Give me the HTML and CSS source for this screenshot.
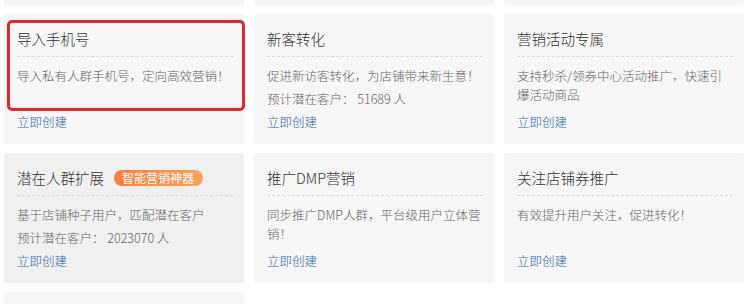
FILE: index.html
```html
<!DOCTYPE html>
<html lang="zh-CN">
<head>
<meta charset="utf-8">
<link rel="stylesheet" href="styles.css">
</head>
<body>
<div class="grid">
  <div class="stub"></div>
  <div class="stub"></div>
  <div class="stub"></div>

  <div class="card">
    <div class="title">导入手机号</div>
    <p class="desc">导入私有人群手机号，定向高效营销！</p>
    <a class="link" href="#">立即创建</a>
    <div class="highlight"></div>
  </div>
  <div class="card">
    <div class="title">新客转化</div>
    <p class="desc">促进新访客转化，为店铺带来新生意！</p>
    <p class="desc extra">预计潜在客户： 51689 人</p>
    <a class="link" href="#">立即创建</a>
  </div>
  <div class="card">
    <div class="title">营销活动专属</div>
    <p class="desc">支持秒杀/领券中心活动推广，快速引爆活动商品</p>
    <a class="link" href="#">立即创建</a>
  </div>

  <div class="card hover">
    <div class="title">潜在人群扩展<span class="badge">智能营销神器</span></div>
    <p class="desc">基于店铺种子用户，匹配潜在客户</p>
    <p class="desc extra">预计潜在客户： 2023070 人</p>
    <a class="link" href="#">立即创建</a>
  </div>
  <div class="card">
    <div class="title">推广DMP营销</div>
    <p class="desc">同步推广DMP人群，平台级用户立体营销！</p>
    <a class="link" href="#">立即创建</a>
  </div>
  <div class="card">
    <div class="title">关注店铺券推广</div>
    <p class="desc">有效提升用户关注，促进转化！</p>
    <a class="link" href="#">立即创建</a>
  </div>

  <div class="stub bottom"></div>
</div>
</body>
</html>
```

FILE: styles.css
```css
html, body {
  margin: 0;
  padding: 0;
  background: #fff;
}
body {
  font-family: "Noto Sans CJK SC", "Microsoft YaHei", sans-serif;
  width: 752px;
  height: 304px;
  overflow: hidden;
}
.grid {
  display: grid;
  grid-template-columns: 240px 240px 240px;
  grid-template-rows: 5px 130px 130px 12px;
  column-gap: 10px;
  row-gap: 9px;
  padding-left: 4px;
}
.stub {
  background: #f6f6f6;
  border-radius: 0 0 3px 3px;
}
.stub.bottom {
  border-radius: 3px 3px 0 0;
}
.card {
  position: relative;
  background: #f6f6f6;
  border-radius: 3px;
  padding: 15px 11px 13px 13px;
  box-sizing: border-box;
  display: flex;
  flex-direction: column;
}
.card.hover {
  background: #f0f0f0;
}
.title {
  font-size: 14.5px;
  font-weight: 300;
  line-height: 20px;
  color: #333;
  padding-bottom: 7px;
  border-bottom: 1px dashed #dadada;
  display: flex;
  align-items: center;
  white-space: nowrap;
}
.badge {
  display: inline-block;
  margin-left: 10px;
  height: 16px;
  line-height: 16px;
  padding: 0 9px 0 8px;
  font-size: 12px;
  font-weight: 400;
  color: #fff;
  border-radius: 8px;
  background: linear-gradient(to right, #f47f3d, #f9a35b);
}
.desc {
  margin: 9px 0 0;
  font-size: 12.5px;
  font-weight: 300;
  line-height: 19px;
  color: #666;
}
.desc.extra {
  margin-top: 4px;
}
.link {
  margin-top: auto;
  font-size: 12.5px;
  font-weight: 300;
  line-height: 19px;
  color: #2f67a6;
  text-decoration: none;
}
.highlight {
  position: absolute;
  left: 3px;
  top: 6px;
  width: 238px;
  height: 91px;
  box-sizing: border-box;
  border: 3px solid #e5262a;
  border-radius: 5px;
  pointer-events: none;
}
```
